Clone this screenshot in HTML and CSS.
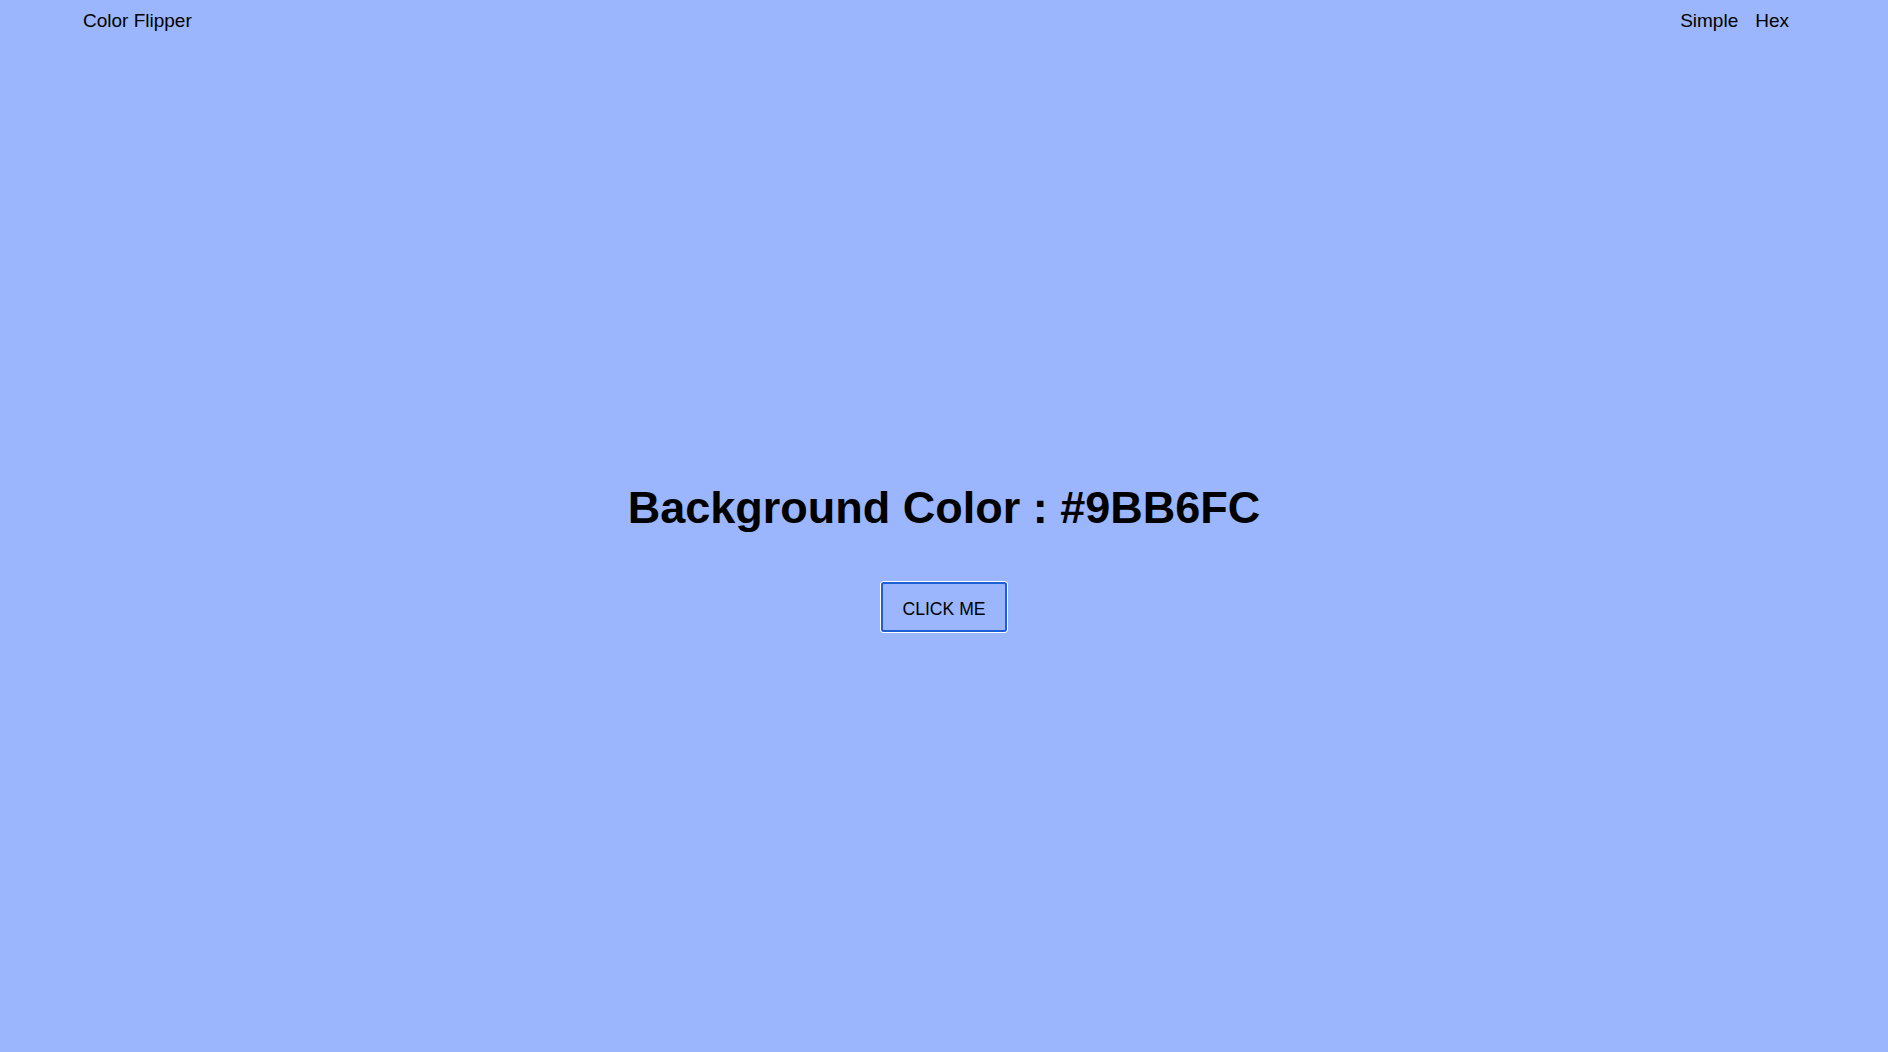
FILE: index.html
```html
<!DOCTYPE html>
<html lang="en">
<head>
<meta charset="utf-8">
<title>Color Flipper</title>
<link rel="stylesheet" href="styles.css">
</head>
<body>
<header class="nav">
  <span class="brand">Color Flipper</span>
  <ul class="links">
    <li><a href="#" class="link">Simple</a></li>
    <li><a href="#" class="link">Hex</a></li>
  </ul>
</header>
<main class="main">
  <h2 class="title">Background Color : #9BB6FC</h2>
  <button class="btn">CLICK ME</button>
</main>
</body>
</html>
```
FILE: styles.css
```css
html, body {
  margin: 0;
  padding: 0;
}
body {
  background: #9bb6fc;
  color: #000;
  font-family: "Liberation Sans", Arial, sans-serif;
  min-height: 100vh;
}
.nav {
  display: flex;
  justify-content: space-between;
  align-items: flex-start;
  padding: 11px 99px 0 83px;
  font-size: 19px;
  line-height: 19px;
}
.brand {
  display: block;
}
.links {
  display: flex;
  gap: 17px;
  list-style: none;
  margin: 0;
  padding: 0;
}
.link {
  color: #000;
  text-decoration: none;
}
.main {
  display: flex;
  flex-direction: column;
  align-items: center;
  padding-top: 455px;
}
.title {
  margin: 0;
  font-size: 45px;
  line-height: 45px;
  font-weight: bold;
}
.btn {
  margin-top: 52px;
  box-sizing: border-box;
  width: 126px;
  height: 50px;
  padding: 16px 0 12px;
  background: transparent;
  border: 2px solid #1f5fd6;
  border-radius: 3px;
  box-shadow: 0 0 0 1px #ffffff;
  font-family: "Liberation Sans", Arial, sans-serif;
  font-size: 17.6px;
  line-height: 18px;
  color: #000;
  text-align: center;
  cursor: pointer;
}
```
